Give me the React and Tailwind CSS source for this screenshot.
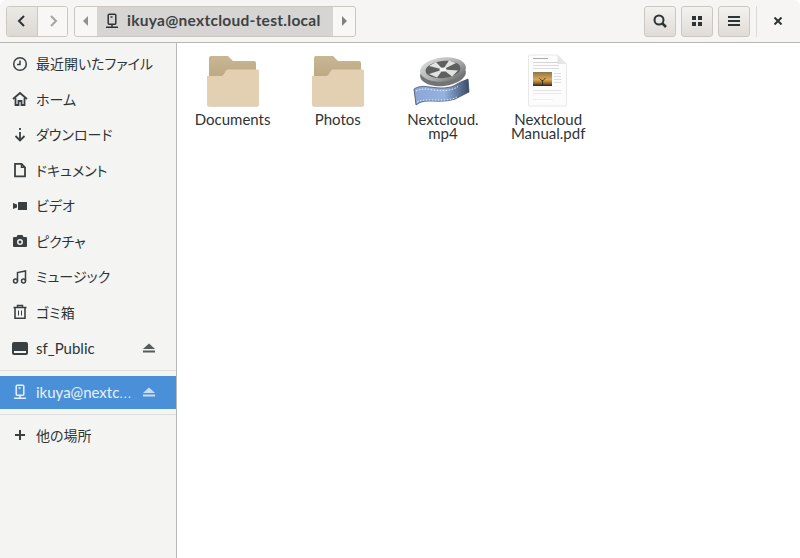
const Row = ({ icon, label, eject, active, latin }) => (
  <div className={`flex items-center pl-3 pr-5 ${latin ? "text-[15px]" : "text-[14px] [font-feature-settings:'palt']"} ${active ? "h-[33px] bg-[#4a90d9] text-[#e8f1fb]" : "h-[35.5px] text-[#2e3436]"}`}>
    <span className={`flex w-[16px] justify-center ${active ? "text-[#e8f1fb]" : "text-[#3a4042]"}`}>{icon}</span>
    <span className="ml-2 flex-1 whitespace-nowrap">{label}</span>
    {eject && <Eject />}
  </div>
);

const I = ({ children, size = 16 }) => (
  <svg width={size} height={size} viewBox="0 0 16 16" fill="none" stroke="currentColor" strokeWidth="1.5">{children}</svg>
);

const Eject = () => (
  <svg width="14" height="14" viewBox="0 0 14 14" fill="currentColor" className="opacity-80"><path d="M7 2.500l6 5.500H1z" /><rect x="1" y="9.500" width="12" height="2" /></svg>
);

const Server = () => (
  <I>
    <rect x="4.200" y="1.200" width="7.600" height="10" rx="1" />
    <path d="M8 11v3M2 14.200h12" />
    <path d="M6.500 4h2" />
  </I>
);

const Folder = () => (
  <svg width="54" height="52" viewBox="0 0 54 52" className="block">
    <defs>
      <linearGradient id="back" x1="0" y1="0" x2="0" y2="1">
        <stop offset="0" stopColor="#c9b693" /><stop offset="1" stopColor="#b9a57f" />
      </linearGradient>
    </defs>
    <path d="M3 3a2 2 0 0 1 2-2h17l5 5h21a2 2 0 0 1 2 2v20H3z" fill="url(#back)" />
    <path d="M1 21h14c1 0 2-.5 3-2l2-3.500c.6-.7 1.200-1 2-1h30a1 1 0 0 1 1 1V49a2 2 0 0 1-2 2H3a2 2 0 0 1-2-2z" fill="#e3d0b3" />
    <path d="M1 49.500a2 2 0 0 0 2 2h48a2 2 0 0 0 2-2V49a2 2 0 0 1-2 2H3a2 2 0 0 1-2-2z" fill="#b9a98f" />
  </svg>
);

const Reel = () => (
  <svg width="60" height="52" viewBox="2 0 60 52" className="block">
    <defs>
      <linearGradient id="metal" x1="0" y1="0" x2="1" y2="1">
        <stop offset="0" stopColor="#e4e4e2" /><stop offset="0.6" stopColor="#a5a7a6" /><stop offset="1" stopColor="#5c5e5f" />
      </linearGradient>
      <linearGradient id="film" x1="0" y1="0" x2="1" y2="0">
        <stop offset="0" stopColor="#8aa7d6" /><stop offset="0.55" stopColor="#94b1e0" /><stop offset="1" stopColor="#3a4b66" />
      </linearGradient>
    </defs>
    <ellipse cx="32" cy="19" rx="23" ry="12" fill="#737575" transform="rotate(-6 32 19)" />
    <ellipse cx="32" cy="14.500" rx="23" ry="12" fill="url(#metal)" transform="rotate(-6 32 14.500)" />
    <ellipse cx="32" cy="14.500" rx="17.500" ry="8.500" fill="#5d5f60" transform="rotate(-6 32 14.500)" />
    <path d="M32 14.500L18 11l7-4zM32 14.500l6-9 7 2.500zM32 14.500l15 1-6 6zM32 14.500l-6 8-8-3.500z" fill="#e2e2df" />
    <ellipse cx="32" cy="14.500" rx="3.500" ry="2" fill="#f3f3f1" />
    <path d="M3 34c5-3 9-3 16-2 10 1.500 20 2 27-3 3-2 7-3 11-5l1 13c-5 2-9 5-14 7-9 3-18 2-27 2-5 0-8 1-12 4z" fill="url(#film)" stroke="#3c4d68" strokeWidth="0.800" />
    <path d="M5 36c5-2 9-2.500 14-1.500 10 2 21 2 28-3M6 47c5-2 8-2 14-2 9 0 19 1 26-3" fill="none" stroke="#e8edf5" strokeWidth="1" strokeDasharray="1.500 1.500" />
  </svg>
);

const Pdf = () => (
  <svg width="40" height="53" viewBox="0 0 40 53" className="block">
    <defs>
      <linearGradient id="sun" x1="0" y1="0" x2="0" y2="1">
        <stop offset="0" stopColor="#8a7554" /><stop offset="0.55" stopColor="#e0a94e" /><stop offset="0.8" stopColor="#8f6a32" /><stop offset="1" stopColor="#26221b" />
      </linearGradient>
    </defs>
    <path d="M1.500 1h28l9 9v41a1 1 0 0 1-1 1h-36a1 1 0 0 1-1-1V2a1 1 0 0 1 1-1z" fill="#fcfcfc" stroke="#e8e8e8" />
    <path d="M29.500 1v9h9z" fill="#e6e6e6" />
    <rect x="5" y="4" width="15" height="1" fill="#a9a9a9" />
    <rect x="5" y="8" width="26" height="1" fill="#d5d5d5" />
    <rect x="5" y="11" width="26" height="1" fill="#dcdcdc" />
    <rect x="5" y="14" width="26" height="1" fill="#dcdcdc" />
    <rect x="5" y="18" width="19" height="14" fill="url(#sun)" />
    <path d="M14.500 32v-6M14.500 27l-3-2.500M14.500 27l3-3" stroke="#26221b" strokeWidth="0.800" />
    <rect x="26" y="19" width="7" height="1" fill="#dcdcdc" />
    <rect x="26" y="22" width="7" height="1" fill="#dcdcdc" />
    <rect x="26" y="25" width="7" height="1" fill="#dcdcdc" />
    <rect x="26" y="28" width="7" height="1" fill="#dcdcdc" />
    <rect x="5" y="36" width="28" height="1" fill="#e2e2e2" />
    <rect x="5" y="39" width="28" height="1" fill="#e8e8e8" />
    <rect x="5" y="45" width="20" height="1" fill="#efefef" />
  </svg>
);

const FileItem = ({ icon, label }) => (
  <div className="flex w-[105.200px] flex-col items-center">
    <div className="flex h-[52px] items-end">{icon}</div>
    <div className="mt-[5px] whitespace-pre-line text-center text-[15px] leading-[14px] text-[#2e3436]">{label}</div>
  </div>
);

const ToolBtn = ({ children }) => (
  <button className="flex h-[31px] w-[32px] items-center justify-center rounded-[3px] border border-[#cdc7c2] bg-gradient-to-b from-[#f4f2f0] to-[#dfdcd8] text-[#2e3436]">
    {children}
  </button>
);

export default function App() {
  return (
    <div className="flex h-[558px] w-[800px] flex-col overflow-hidden rounded-t-[6px] bg-white font-['Lato','Noto_Sans_CJK_JP',sans-serif]">
      <header className="flex h-[43px] shrink-0 items-center border-b border-[#b6b6b3] bg-[#f6f5f4] pl-[6px] pr-[18px]">
        <div className="flex h-[31px] w-[62px] overflow-hidden rounded-[3px] border border-[#cdc7c2]">
          <div className="flex w-[31px] items-center justify-center border-r border-[#cdc7c2] bg-gradient-to-b from-[#ebe9e6] to-[#dcd9d5] text-[#2e3436]">
            <I><path d="M10 3L5 8l5 5" strokeWidth="2" /></I>
          </div>
          <div className="flex flex-1 items-center justify-center bg-[#f8f7f6] text-[#a3a5a5]">
            <I><path d="M6 3l5 5-5 5" strokeWidth="2" /></I>
          </div>
        </div>
        <div className="ml-[6px] flex h-[31px] w-[282px] overflow-hidden rounded-[3px] border border-[#cdc7c2] bg-[#f8f7f6]">
          <div className="flex w-[22px] items-center justify-center text-[#8f9192]">
            <svg width="6" height="10" viewBox="0 0 6 10" fill="currentColor"><path d="M5 0v10L0 5z" /></svg>
          </div>
          <div className="flex w-[236px] items-center bg-[#d6d5d3] pl-[7px] text-[15.500px] font-bold text-[#3d4244]">
            <span className="text-[#2e3436]"><Server /></span>
            <span className="ml-[7px] tracking-[0.280px]">ikuya@nextcloud-test.local</span>
          </div>
          <div className="flex flex-1 items-center justify-center text-[#7f8182]">
            <svg width="6" height="10" viewBox="0 0 6 10" fill="currentColor"><path d="M1 0v10l5-5z" /></svg>
          </div>
        </div>
        <div className="ml-auto flex items-center gap-[5px]">
          <ToolBtn>
            <svg width="16" height="16" viewBox="0 0 16 16" fill="none" stroke="currentColor" strokeWidth="2"><circle cx="7" cy="7" r="4.500" /><path d="M10.500 10.500L14 14" strokeWidth="2.500" /></svg>
          </ToolBtn>
          <ToolBtn>
            <svg width="10" height="10" viewBox="0 0 10 10" fill="currentColor"><rect width="4" height="4" /><rect x="6" width="4" height="4" /><rect y="6" width="4" height="4" /><rect x="6" y="6" width="4" height="4" /></svg>
          </ToolBtn>
          <ToolBtn>
            <svg width="12" height="10" viewBox="0 0 12 10" fill="currentColor"><rect width="12" height="2" /><rect y="4" width="12" height="2" /><rect y="8" width="12" height="2" /></svg>
          </ToolBtn>
          <div className="ml-[1px] h-[31px] w-px bg-[#dedcda]" />
          <svg className="ml-[12px] text-[#2e3436]" width="8" height="8" viewBox="0 0 8 8" stroke="currentColor" strokeWidth="2"><path d="M0.500 0.500l7 7M7.500 0.500l-7 7" /></svg>
        </div>
      </header>
      <div className="flex flex-1">
        <aside className="flex w-[177px] shrink-0 flex-col border-r border-[#b8b8b5] bg-[#f4f4f3] pt-[3px]">
          <Row label="最近開いたファイル" icon={<I><circle cx="8" cy="8" r="6.300" /><path d="M8 4.500V8.500H5" /></I>} />
          <Row label="ホーム" icon={<I><path d="M1 8l7-6 7 6" strokeWidth="1.800" /><path d="M3.500 7v7h3v-4h3v4h3V7" strokeWidth="1.800" /></I>} />
          <Row label="ダウンロード" icon={<I><path d="M8 1v2M8 5v8" strokeWidth="1.800" /><path d="M3.500 9L8 13.500 12.500 9" strokeWidth="1.800" /></I>} />
          <Row label="ドキュメント" icon={<I><path d="M3 1.800h6.500L13 5.300v9H3z" strokeWidth="1.800" /><path d="M9.500 1.800v3.500H13" strokeWidth="1.500" /></I>} />
          <Row label="ビデオ" icon={<svg width="16" height="16" viewBox="0 0 16 16" fill="currentColor"><rect x="6" y="4" width="9" height="8" rx="0.500" /><path d="M5 6.500L1 5v6l4-1.500z" /></svg>} />
          <Row label="ピクチャ" icon={<svg width="16" height="16" viewBox="0 0 16 16" fill="currentColor"><path fillRule="evenodd" d="M2 4h2.500l1-2h5l1 2H14a1 1 0 0 1 1 1v8a1 1 0 0 1-1 1H2a1 1 0 0 1-1-1V5a1 1 0 0 1 1-1zm6 2a3 3 0 1 0 0 6 3 3 0 0 0 0-6z" /><circle cx="8" cy="9" r="1.500" /></svg>} />
          <Row label="ミュージック" icon={<I><circle cx="3.500" cy="12" r="2" /><circle cx="11.500" cy="12" r="2" /><path d="M5.500 12V3.500l8-1.500V12" /></I>} />
          <Row label="ゴミ箱" icon={<I><path d="M1.500 3.500h13M5.500 3V1.500h5V3" /><path d="M3 4v10.200h10V4" strokeWidth="1.600" /><path d="M6.500 6.500v5M9.500 6.500v5" strokeWidth="1" /></I>} />
          <Row latin label="sf_Public" eject icon={<svg width="16" height="16" viewBox="0 0 16 16" fill="currentColor"><path fillRule="evenodd" d="M2 2h12a2 2 0 0 1 2 2v9a2 2 0 0 1-2 2H2a2 2 0 0 1-2-2V4a2 2 0 0 1 2-2zm0 9v2h12v-2z" /></svg>} />
          <div className="mb-[5px] mt-[4px] h-px bg-[#dcdcda]" />
          <Row latin active label={<>ikuya@nextc<span className="text-[11px]">⋯</span></>} eject icon={<Server />} />
          <div className="mt-[5px] h-px bg-[#dcdcda]" />
          <div className="mt-[3px]">
            <Row label="他の場所" icon={<svg width="10" height="10" viewBox="0 0 10 10" stroke="currentColor" strokeWidth="2"><path d="M5 0v10M0 5h10" /></svg>} />
          </div>
        </aside>
        <main className="flex flex-1 items-start bg-white pl-[3px] pt-[12px]">
          <FileItem icon={<Folder />} label="Documents" />
          <FileItem icon={<Folder />} label="Photos" />
          <FileItem icon={<Reel />} label={"Nextcloud.\nmp4"} />
          <FileItem icon={<Pdf />} label={"Nextcloud\nManual.pdf"} />
        </main>
      </div>
    </div>
  );
}
